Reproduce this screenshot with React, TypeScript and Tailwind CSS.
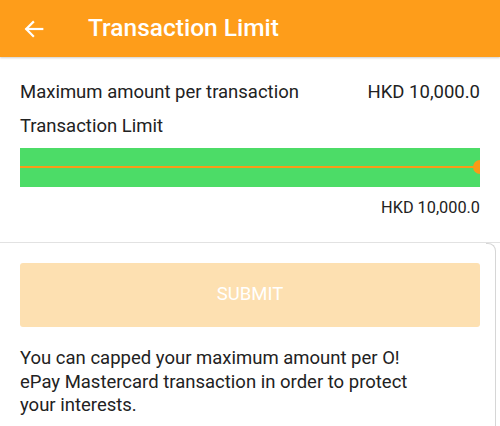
import React from "react";

export default function App() {
  return (
    <div className="w-[500px] h-[426px] overflow-hidden bg-white" style={{ fontFamily: "Roboto, 'Liberation Sans', sans-serif" }}>
      <div className="h-[57px] bg-[#fe9d1a] flex items-center shadow-[0_1px_2px_rgba(0,0,0,0.2)]">
        <div className="w-[88px] pl-[23px] flex items-center">
          <svg width="22" height="22" viewBox="0 0 24 24" fill="none" stroke="white" strokeWidth="2.4" strokeLinecap="square">
            <path d="M21 12H4" />
            <path d="M11 4.5L3.5 12L11 19.5" />
          </svg>
        </div>
        <div className="text-white text-[24.5px] font-medium">Transaction Limit</div>
      </div>
      <div className="px-[20px] pt-[22px]">
        <div className="flex justify-between text-[18.5px] text-[#222] leading-[26px]">
          <span>Maximum amount per transaction</span>
          <span>HKD 10,000.0</span>
        </div>
        <div className="text-[18.5px] text-[#222] leading-[26px] mt-[8px]">Transaction Limit</div>
        <div className="relative mt-[9px] h-[39px] bg-[#4cdc67] overflow-hidden">
          <div className="absolute left-0 right-0 top-[18px] h-[2px] bg-[#fb9a17]" />
          <div className="absolute right-[-7px] top-[12px] w-[14px] h-[14px] rounded-full bg-[#fb9a17]" />
        </div>
        <div className="text-right text-[16.3px] text-[#222] mt-[11px] leading-[20px]">HKD 10,000.0</div>
      </div>
      <div className="mt-[24px] border-t border-[#e2e2e2] relative">
        <div className="absolute right-[4px] top-0 w-[10px] h-[200px] border-r border-t border-[#d6d6d6] rounded-tr-[8px]" />
        <div className="px-[20px] pt-[20px]">
          <div className="h-[64px] rounded-[3px] bg-[#fde0b1] flex items-center justify-center text-white text-[18.5px]">SUBMIT</div>
          <p className="mt-[20px] text-[18.5px] leading-[23.5px] text-[#222]">
            You can capped your maximum amount per O!
            <br />
            ePay Mastercard transaction in order to protect
            <br />
            your interests.
          </p>
        </div>
      </div>
    </div>
  );
}
